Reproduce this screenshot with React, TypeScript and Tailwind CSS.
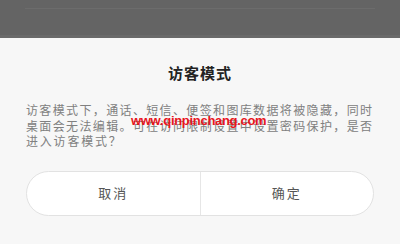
export default function App() {
  const lines = [
    '访客模式下，通话、短信、便签和图库数据将被隐藏，同时',
    '桌面会无法编辑。可在访问限制设置中设置密码保护，是否',
  ];

  return (
    <div
      className="w-[400px] h-[244px] overflow-hidden bg-[#f7f7f7] flex flex-col"
      style={{ fontFamily: '"Noto Sans CJK SC", "Noto Sans", sans-serif' }}
    >
      {/* dimmed screen behind the dialog */}
      <div className="h-[38px] bg-[#646464] flex flex-col">
        <div className="mt-[8px] mx-[25px] h-px bg-[#6c6c6c]" />
        <div className="mt-auto h-[3px] bg-[#6a6a6a]" />
      </div>

      <div className="relative flex-1 flex flex-col px-[26px]">
        <h2 className="mt-[25px] text-center text-[15px] font-bold tracking-[1px] leading-[20px] text-[#222]">
          访客模式
        </h2>

        <div className="mt-[19px] text-[12px] leading-[15.5px] text-[#808080] pr-[2px]">
          {lines.map((line) => (
            <div key={line} className="text-justify [text-align-last:justify]">
              {line}
            </div>
          ))}
          <div className="tracking-[1.8px]">进入访客模式？</div>
        </div>

        <div
          className="absolute left-[131px] top-[73px] text-[13px] font-bold text-[#e8141c] tracking-[-0.3px]"
          style={{ fontFamily: '"Liberation Sans", Arial, sans-serif' }}
        >
          www.qinpinchang.com
        </div>

        <div className="mt-[22px] h-[45px] flex rounded-full border border-[#e2e2e2] bg-white overflow-hidden">
          <button className="flex-1 flex items-center justify-center text-[13px] tracking-[2px] text-[#555]">
            取消
          </button>
          <div className="w-px bg-[#e6e6e6]" />
          <button className="flex-1 flex items-center justify-center text-[13px] tracking-[2px] text-[#555]">
            确定
          </button>
        </div>
      </div>
    </div>
  );
}
